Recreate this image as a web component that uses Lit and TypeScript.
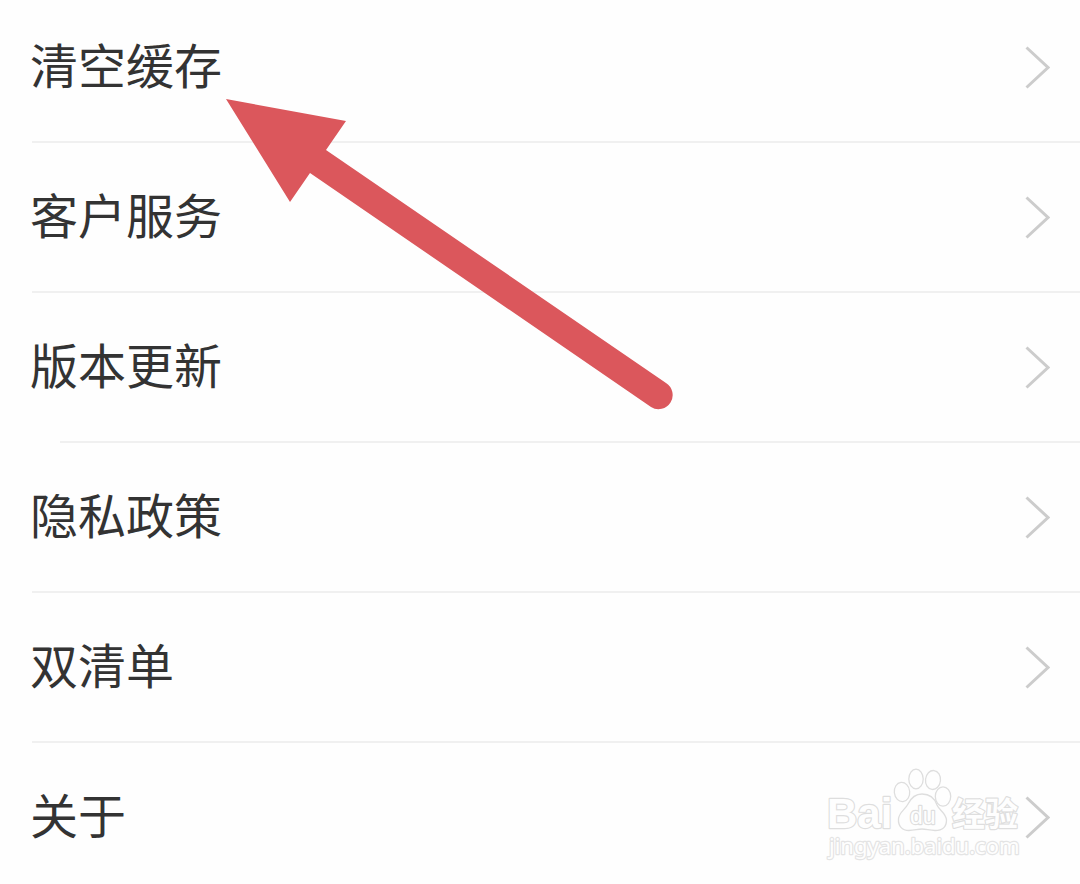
import { LitElement, html, css } from "lit";
import { customElement, state } from "lit/decorators.js";
import { classMap } from "lit/directives/class-map.js";

interface Entry {
  label: string;
  inset?: boolean;
}

@customElement("settings-row")
class SettingsRow extends LitElement {
  static properties = { label: {} };
  declare label: string;

  static styles = css`
    :host {
      display: block;
    }
    .row {
      display: flex;
      align-items: center;
      justify-content: space-between;
      width: 100%;
      box-sizing: border-box;
      margin: 0;
      padding: 0 30px;
      border: 0;
      background: none;
      color: #333;
      font: 400 48px/64px "Noto Sans CJK SC", sans-serif;
      text-align: left;
      cursor: pointer;
    }
    .label {
      padding-bottom: 8px;
    }
    .chevron {
      flex: none;
      width: 26px;
      height: 44px;
      fill: none;
      stroke: #ccc;
      stroke-width: 3;
    }
  `;

  render() {
    return html`
      <button class="row" type="button">
        <span class="label">${this.label}</span>
        <svg class="chevron" viewBox="0 0 26 44" aria-hidden="true">
          <path d="M2.500 2.500 24 22.500 2.500 42.500" />
        </svg>
      </button>
    `;
  }
}

@customElement("baidu-watermark")
class BaiduWatermark extends LitElement {
  static styles = css`
    :host {
      display: block;
    }
    .mark {
      display: block;
      width: 200px;
      height: 100px;
      overflow: visible;
      fill: #fefefe;
      stroke: #dedede;
      stroke-width: 1.3;
    }
    .mark text {
      paint-order: stroke;
      stroke-width: 2.4;
      stroke-linejoin: round;
    }
    .mark .brand {
      font: 700 42px "Liberation Sans", sans-serif;
    }
    .mark .du {
      font: 400 23px "Liberation Sans", sans-serif;
    }
    .mark .cjk {
      font: 700 33px "Noto Sans CJK SC", sans-serif;
    }
    .mark .site {
      font: 400 22px "Noto Sans", sans-serif;
      stroke: #e4e4e4;
    }
  `;

  render() {
    return html`
      <svg class="mark" viewBox="0 0 200 100" aria-label="Baidu">
        <text class="brand" x="1" y="63">Bai</text>
        <ellipse cx="76" cy="27" rx="7.7" ry="9.7" transform="rotate(-6 76 27)" />
        <ellipse cx="90" cy="14" rx="7.2" ry="9.8" />
        <ellipse cx="107" cy="15" rx="7.5" ry="9.5" transform="rotate(6 107 15)" />
        <ellipse cx="117" cy="31.5" rx="7.7" ry="9.7" />
        <path
          d="M96 29C104 29 109 34 111 40C113 45 120 48 120.500 55C120.500 62 116 65.500 109 65.500C104 65.500 100 64 96 64C92 64 88 65.500 83 65.500C76 65.500 72 61 72.500 54C73 47 79 45 82 39C85 33 89 29 96 29Z"
        />
        <text class="du" x="84" y="59">du</text>
        <text class="cjk" x="126" y="61">经验</text>
        <text class="site" x="3" y="89">jingyan.baidu.com</text>
      </svg>
    `;
  }
}

@customElement("app-root")
class AppRoot extends LitElement {
  @state() private entries: Entry[] = [
    { label: "清空缓存" },
    { label: "客户服务" },
    { label: "版本更新", inset: true },
    { label: "隐私政策" },
    { label: "双清单" },
    { label: "关于" },
  ];

  static styles = css`
    :host {
      display: block;
      position: relative;
      min-height: 100vh;
      overflow: hidden;
      background: #fefefe;
    }
    .list {
      margin: 0;
      padding: 0;
      list-style: none;
    }
    .item {
      padding-top: 38px;
    }
    .item:first-child {
      padding-top: 31px;
    }
    .item:not(:last-child)::after {
      content: "";
      display: block;
      height: 2px;
      margin: 38px 0 0 32px;
      background: #f0f0f0;
    }
    .item.inset::after {
      margin-left: 60px;
    }
    .arrow {
      position: absolute;
      left: 226px;
      top: 98px;
      width: 448px;
      height: 312px;
      fill: #db575c;
      pointer-events: none;
    }
    .watermark {
      position: absolute;
      right: 54px;
      top: 765px;
      pointer-events: none;
    }
  `;

  render() {
    return html`
      <ul class="list">
        ${this.entries.map(
          (e) => html`
            <li class=${classMap({ item: true, inset: !!e.inset })}>
              <settings-row .label=${e.label}></settings-row>
            </li>
          `,
        )}
      </ul>
      <svg class="arrow" viewBox="0 0 448 312" aria-hidden="true">
        <path d="M0 1 120 23 100 52 440 285A14 14 0 0 1 425 309L84 75 64 104Z" />
      </svg>
      <baidu-watermark class="watermark"></baidu-watermark>
    `;
  }
}
